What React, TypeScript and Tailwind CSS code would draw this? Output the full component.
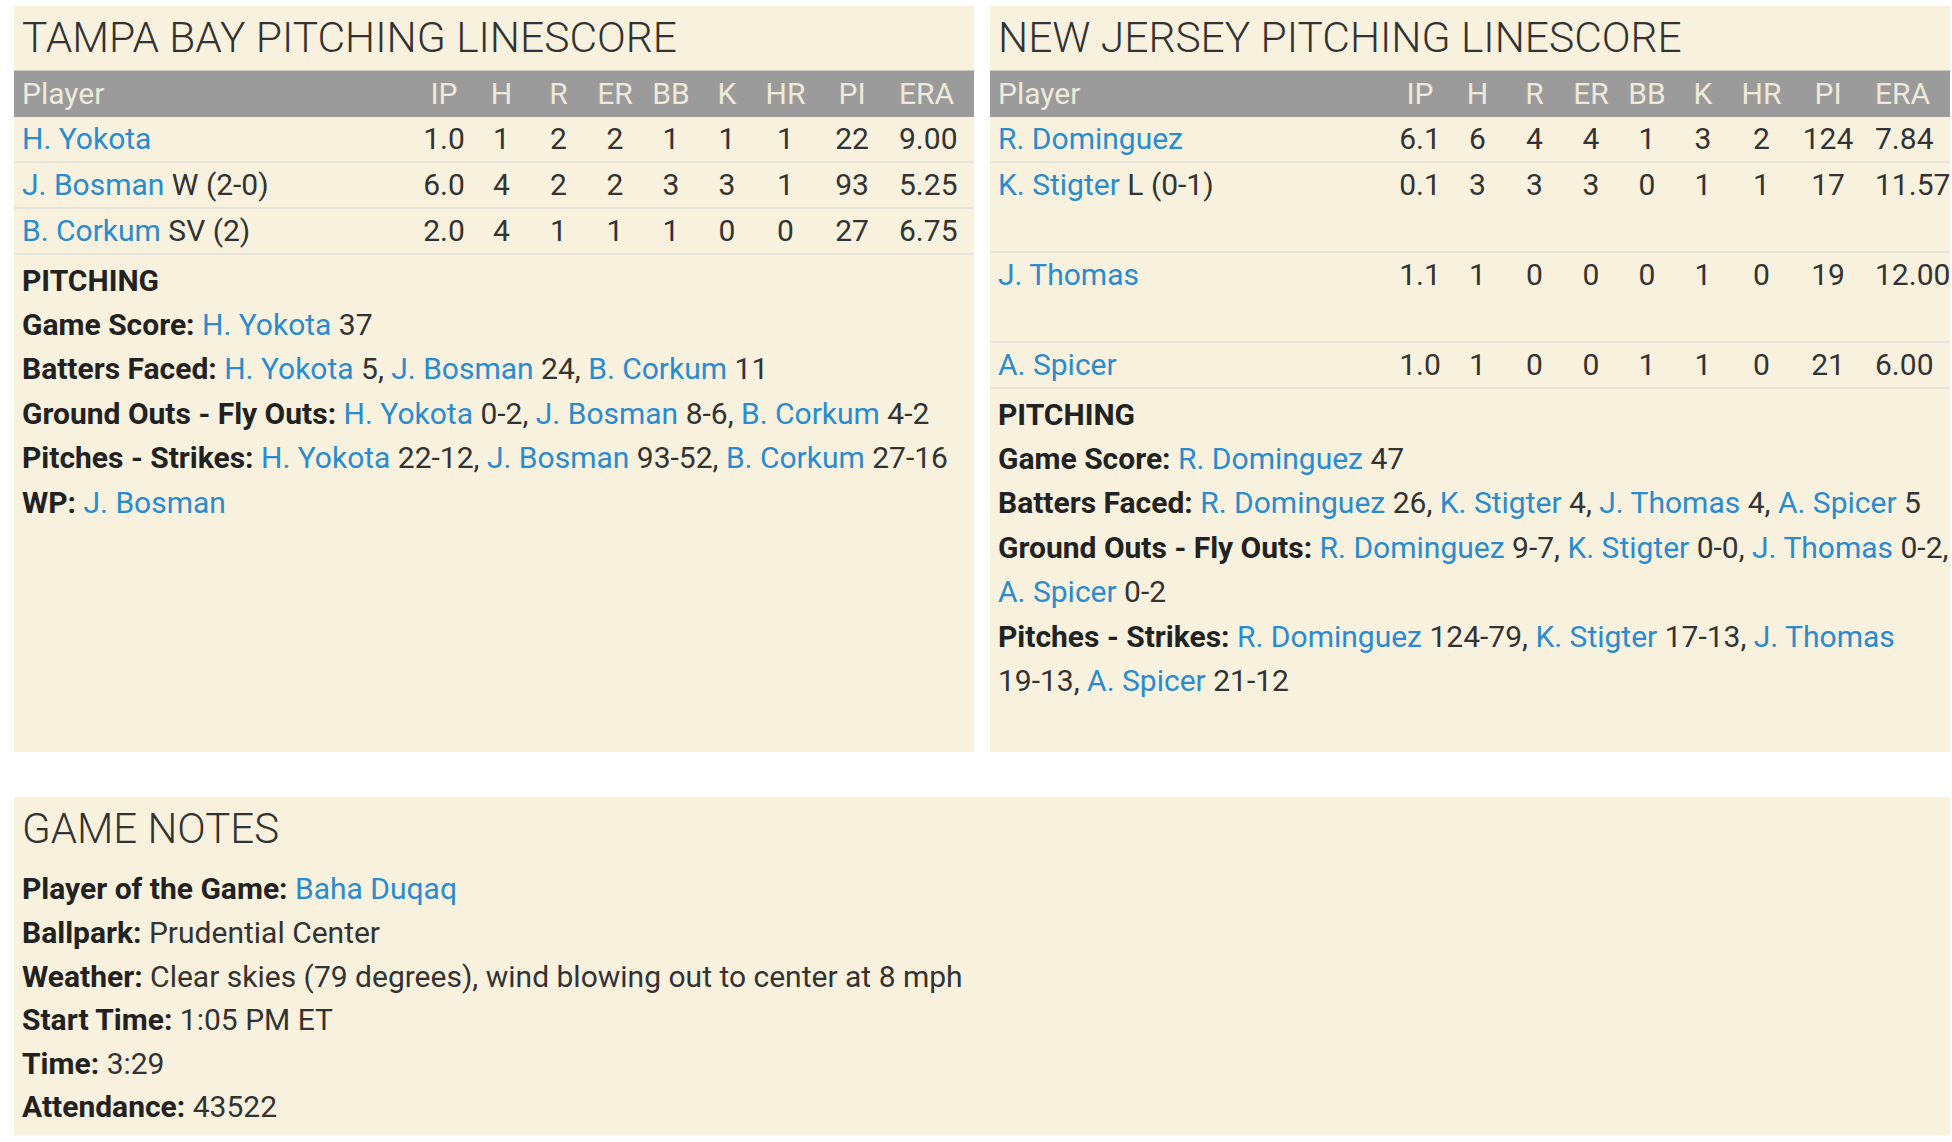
import React from 'react';

type Pitcher = {
    name: string,
    note?: string,
    ip: string, h: number, r: number, er: number, bb: number, k: number, hr: number, pi: number, era: string,
    tall?: boolean,
};

type Part = { link?: string, text?: string };

const tampaBay: Pitcher[] = [
    { name: 'H. Yokota', ip: '1.0', h: 1, r: 2, er: 2, bb: 1, k: 1, hr: 1, pi: 22, era: '9.00' },
    { name: 'J. Bosman', note: 'W (2-0)', ip: '6.0', h: 4, r: 2, er: 2, bb: 3, k: 3, hr: 1, pi: 93, era: '5.25' },
    { name: 'B. Corkum', note: 'SV (2)', ip: '2.0', h: 4, r: 1, er: 1, bb: 1, k: 0, hr: 0, pi: 27, era: '6.75' },
];

const newJersey: Pitcher[] = [
    { name: 'R. Dominguez', ip: '6.1', h: 6, r: 4, er: 4, bb: 1, k: 3, hr: 2, pi: 124, era: '7.84' },
    { name: 'K. Stigter', note: 'L (0-1)', ip: '0.1', h: 3, r: 3, er: 3, bb: 0, k: 1, hr: 1, pi: 17, era: '11.57', tall: true },
    { name: 'J. Thomas', ip: '1.1', h: 1, r: 0, er: 0, bb: 0, k: 1, hr: 0, pi: 19, era: '12.00', tall: true },
    { name: 'A. Spicer', ip: '1.0', h: 1, r: 0, er: 0, bb: 1, k: 1, hr: 0, pi: 21, era: '6.00' },
];

const tampaNotes: [string, Part[]][] = [
    ['Game Score', [{ link: 'H. Yokota' }, { text: ' 37' }]],
    ['Batters Faced', [{ link: 'H. Yokota' }, { text: ' 5, ' }, { link: 'J. Bosman' }, { text: ' 24, ' }, { link: 'B. Corkum' }, { text: ' 11' }]],
    ['Ground Outs - Fly Outs', [{ link: 'H. Yokota' }, { text: ' 0-2, ' }, { link: 'J. Bosman' }, { text: ' 8-6, ' }, { link: 'B. Corkum' }, { text: ' 4-2' }]],
    ['Pitches - Strikes', [{ link: 'H. Yokota' }, { text: ' 22-12, ' }, { link: 'J. Bosman' }, { text: ' 93-52, ' }, { link: 'B. Corkum' }, { text: ' 27-16' }]],
    ['WP', [{ link: 'J. Bosman' }]],
];

const jerseyNotes: [string, Part[]][] = [
    ['Game Score', [{ link: 'R. Dominguez' }, { text: ' 47' }]],
    ['Batters Faced', [{ link: 'R. Dominguez' }, { text: ' 26, ' }, { link: 'K. Stigter' }, { text: ' 4, ' }, { link: 'J. Thomas' }, { text: ' 4, ' }, { link: 'A. Spicer' }, { text: ' 5' }]],
    ['Ground Outs - Fly Outs', [{ link: 'R. Dominguez' }, { text: ' 9-7, ' }, { link: 'K. Stigter' }, { text: ' 0-0, ' }, { link: 'J. Thomas' }, { text: ' 0-2, ' }, { link: 'A. Spicer' }, { text: ' 0-2' }]],
    ['Pitches - Strikes', [{ link: 'R. Dominguez' }, { text: ' 124-79, ' }, { link: 'K. Stigter' }, { text: ' 17-13, ' }, { link: 'J. Thomas' }, { text: ' 19-13, ' }, { link: 'A. Spicer' }, { text: ' 21-12' }]],
];

const gameNotes: [string, Part[]][] = [
    ['Player of the Game', [{ link: 'Baha Duqaq' }]],
    ['Ballpark', [{ text: 'Prudential Center' }]],
    ['Weather', [{ text: 'Clear skies (79 degrees), wind blowing out to center at 8 mph' }]],
    ['Start Time', [{ text: '1:05 PM ET' }]],
    ['Time', [{ text: '3:29' }]],
    ['Attendance', [{ text: '43522' }]],
];

const cols = ['IP', 'H', 'R', 'ER', 'BB', 'K', 'HR', 'PI'];

const Link = ({ children }: { children: React.ReactNode }) => (
    <a className="text-[#2a8bcf] cursor-pointer">{children}</a>
);

// keeps "19-13," from breaking at the hyphen
const Plain = ({ text }: { text: string }) => (
    <>
        {text.split(/(\s+)/).map((t, i) => (
            /\s/.test(t) || !t ? t : <span key={i} className="whitespace-nowrap">{t}</span>
        ))}
    </>
);

const NoteLine = ({ label, parts }: { label: string, parts: Part[] }) => (
    <div>
        <span className="font-bold text-[#222]">{label}:</span>{' '}
        {parts.map((p, i) => p.link ? <Link key={i}>{p.link}</Link> : <Plain key={i} text={p.text} />)}
    </div>
);

const LineScore = ({ title, pitchers, notes }: { title: string, pitchers: Pitcher[], notes: [string, Part[]][] }) => (
    <div className="bg-[#f7f1de] pb-[49px]">
        <h2 className="px-2 pt-[8px] mb-[8px] text-[42.5px] leading-[48px] font-light text-[#333]">{title}</h2>
        <table className="w-full table-fixed border-collapse text-[30px]">
            <colgroup>
                <col className="w-[401px]" />
                <col className="w-[58px]" />
                <col className="w-[57px]" />
                <col className="w-[57px]" />
                <col className="w-[56px]" />
                <col className="w-[56px]" />
                <col className="w-[56px]" />
                <col className="w-[61px]" />
                <col className="w-[72px]" />
                <col />
            </colgroup>
            <thead>
                <tr className="bg-[#9b9b9b] text-[#eee9da] border-t border-[#cfcbbf]">
                    <th className="h-[46px] px-2 text-left font-normal">Player</th>
                    {cols.map((c) => (
                        <th key={c} className="font-normal text-center">{c}</th>
                    ))}
                    <th className="font-normal text-left pl-[11px]">ERA</th>
                </tr>
            </thead>
            <tbody className="text-[#333]">
                {pitchers.map((p) => (
                    <tr key={p.name} className="border-b-2 border-[#e7e4dc] align-top leading-[44px]">
                        <td className={p.tall ? 'h-[90px] px-2' : 'h-[44px] px-2'}>
                            <Link>{p.name}</Link>{p.note && <span> {p.note}</span>}
                        </td>
                        <td className="text-center">{p.ip}</td>
                        <td className="text-center">{p.h}</td>
                        <td className="text-center">{p.r}</td>
                        <td className="text-center">{p.er}</td>
                        <td className="text-center">{p.bb}</td>
                        <td className="text-center">{p.k}</td>
                        <td className="text-center">{p.hr}</td>
                        <td className="text-center">{p.pi}</td>
                        <td className="pl-[11px] whitespace-nowrap">{p.era}</td>
                    </tr>
                ))}
            </tbody>
        </table>
        <div className="pl-2 pt-[4px] text-[30px] leading-[44.4px] text-[#333]">
            <div className="font-bold text-[#222]">PITCHING</div>
            {notes.map(([label, parts]) => (
                <NoteLine key={label} label={label} parts={parts} />
            ))}
        </div>
    </div>
);

export default function App() {
    return (
        <div className="min-h-screen bg-white pt-[6px] pl-[14px] font-['Roboto',sans-serif]">
            <div className="grid grid-cols-[960px_960px] gap-x-[16px]">
                <LineScore title="TAMPA BAY PITCHING LINESCORE" pitchers={tampaBay} notes={tampaNotes} />
                <LineScore title="NEW JERSEY PITCHING LINESCORE" pitchers={newJersey} notes={jerseyNotes} />
            </div>
            <div className="mt-[45px] w-[1936px] bg-[#f7f1de] px-2 pt-[8px] pb-[6px]">
                <h2 className="mb-[14px] text-[42px] leading-[48px] font-light text-[#333]">GAME NOTES</h2>
                <div className="text-[30px] leading-[43.6px] text-[#333]">
                    {gameNotes.map(([label, parts]) => (
                        <NoteLine key={label} label={label} parts={parts} />
                    ))}
                </div>
            </div>
        </div>
    );
}
